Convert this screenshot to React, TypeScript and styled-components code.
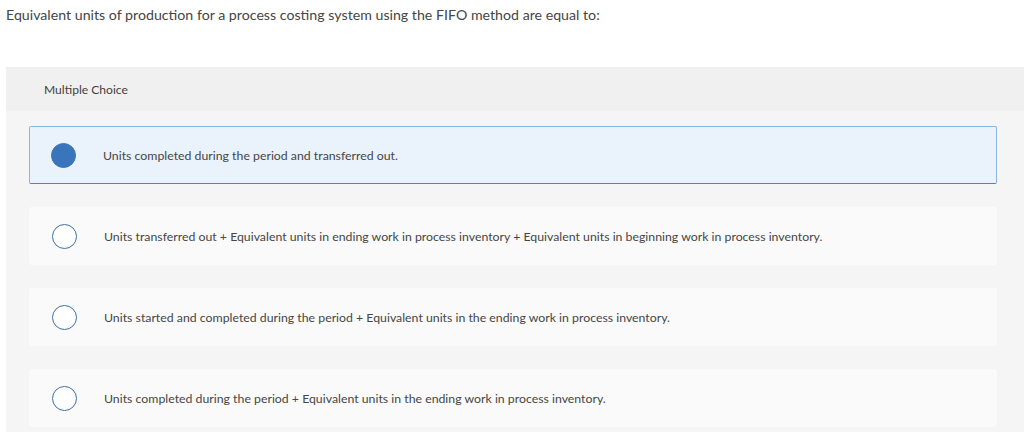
import styled, { createGlobalStyle } from 'styled-components';

const GlobalStyle = createGlobalStyle`
	html, body {
		margin: 0;
		padding: 0;
		background: #ffffff;
	}
	body {
		font-family: Lato, "Liberation Sans", sans-serif;
		color: #333333;
	}
`;

const Page = styled.div`
	padding-left: 6px;
	height: 432px;
	overflow: hidden;
`;

const Question = styled.p`
	margin: 0;
	padding-top: 7px;
	font-size: 14.2px;
	line-height: 16px;
	color: #454545;
`;

const Panel = styled.section`
	margin-top: 44px;
	background: #f5f5f5;
`;

const PanelHeader = styled.div`
	height: 44px;
	display: flex;
	align-items: center;
	padding-left: 38px;
	background: #f0f0f0;
	font-size: 12.1px;
	color: #404040;
`;

const Options = styled.div`
	display: flex;
	flex-direction: column;
	gap: 23px;
	padding: 15px 27px 8px 23px;
`;

const Option = styled.label<{ $selected?: boolean }>`
	box-sizing: border-box;
	height: 58px;
	display: flex;
	align-items: center;
	gap: 27px;
	border-radius: 2px;
	font-size: 12.3px;
	color: #464646;
	cursor: pointer;
	background: ${p => (p.$selected ? '#eaf2fb' : '#fafafa')};
	border: 1px solid ${p => (p.$selected ? '#8db3e0' : '#fafafa')};
	border-bottom-color: ${p => (p.$selected ? '#4a86c8' : '#fafafa')};
	padding-left: ${p => (p.$selected ? '21px' : '22px')};
`;

const Radio = styled.span<{ $checked?: boolean }>`
	box-sizing: border-box;
	flex: none;
	width: 25px;
	height: 25px;
	border-radius: 50%;
	background: ${p => (p.$checked ? '#3a75bb' : '#ffffff')};
	border: 1.5px solid ${p => (p.$checked ? '#3a75bb' : '#3d70a8')};
`;

const choices = [
	'Units completed during the period and transferred out.',
	'Units transferred out + Equivalent units in ending work in process inventory + Equivalent units in beginning work in process inventory.',
	'Units started and completed during the period + Equivalent units in the ending work in process inventory.',
	'Units completed during the period + Equivalent units in the ending work in process inventory.',
];

export default function App() {
	const selected = 0;
	return (
		<>
			<GlobalStyle />
			<Page>
				<Question>
					Equivalent units of production for a process costing system using the FIFO method are equal to:
				</Question>
				<Panel>
					<PanelHeader>Multiple Choice</PanelHeader>
					<Options>
						{choices.map((text, i) => (
							<Option key={i} $selected={i === selected}>
								<Radio $checked={i === selected} />
								<span>{text}</span>
							</Option>
						))}
					</Options>
				</Panel>
			</Page>
		</>
	);
}
